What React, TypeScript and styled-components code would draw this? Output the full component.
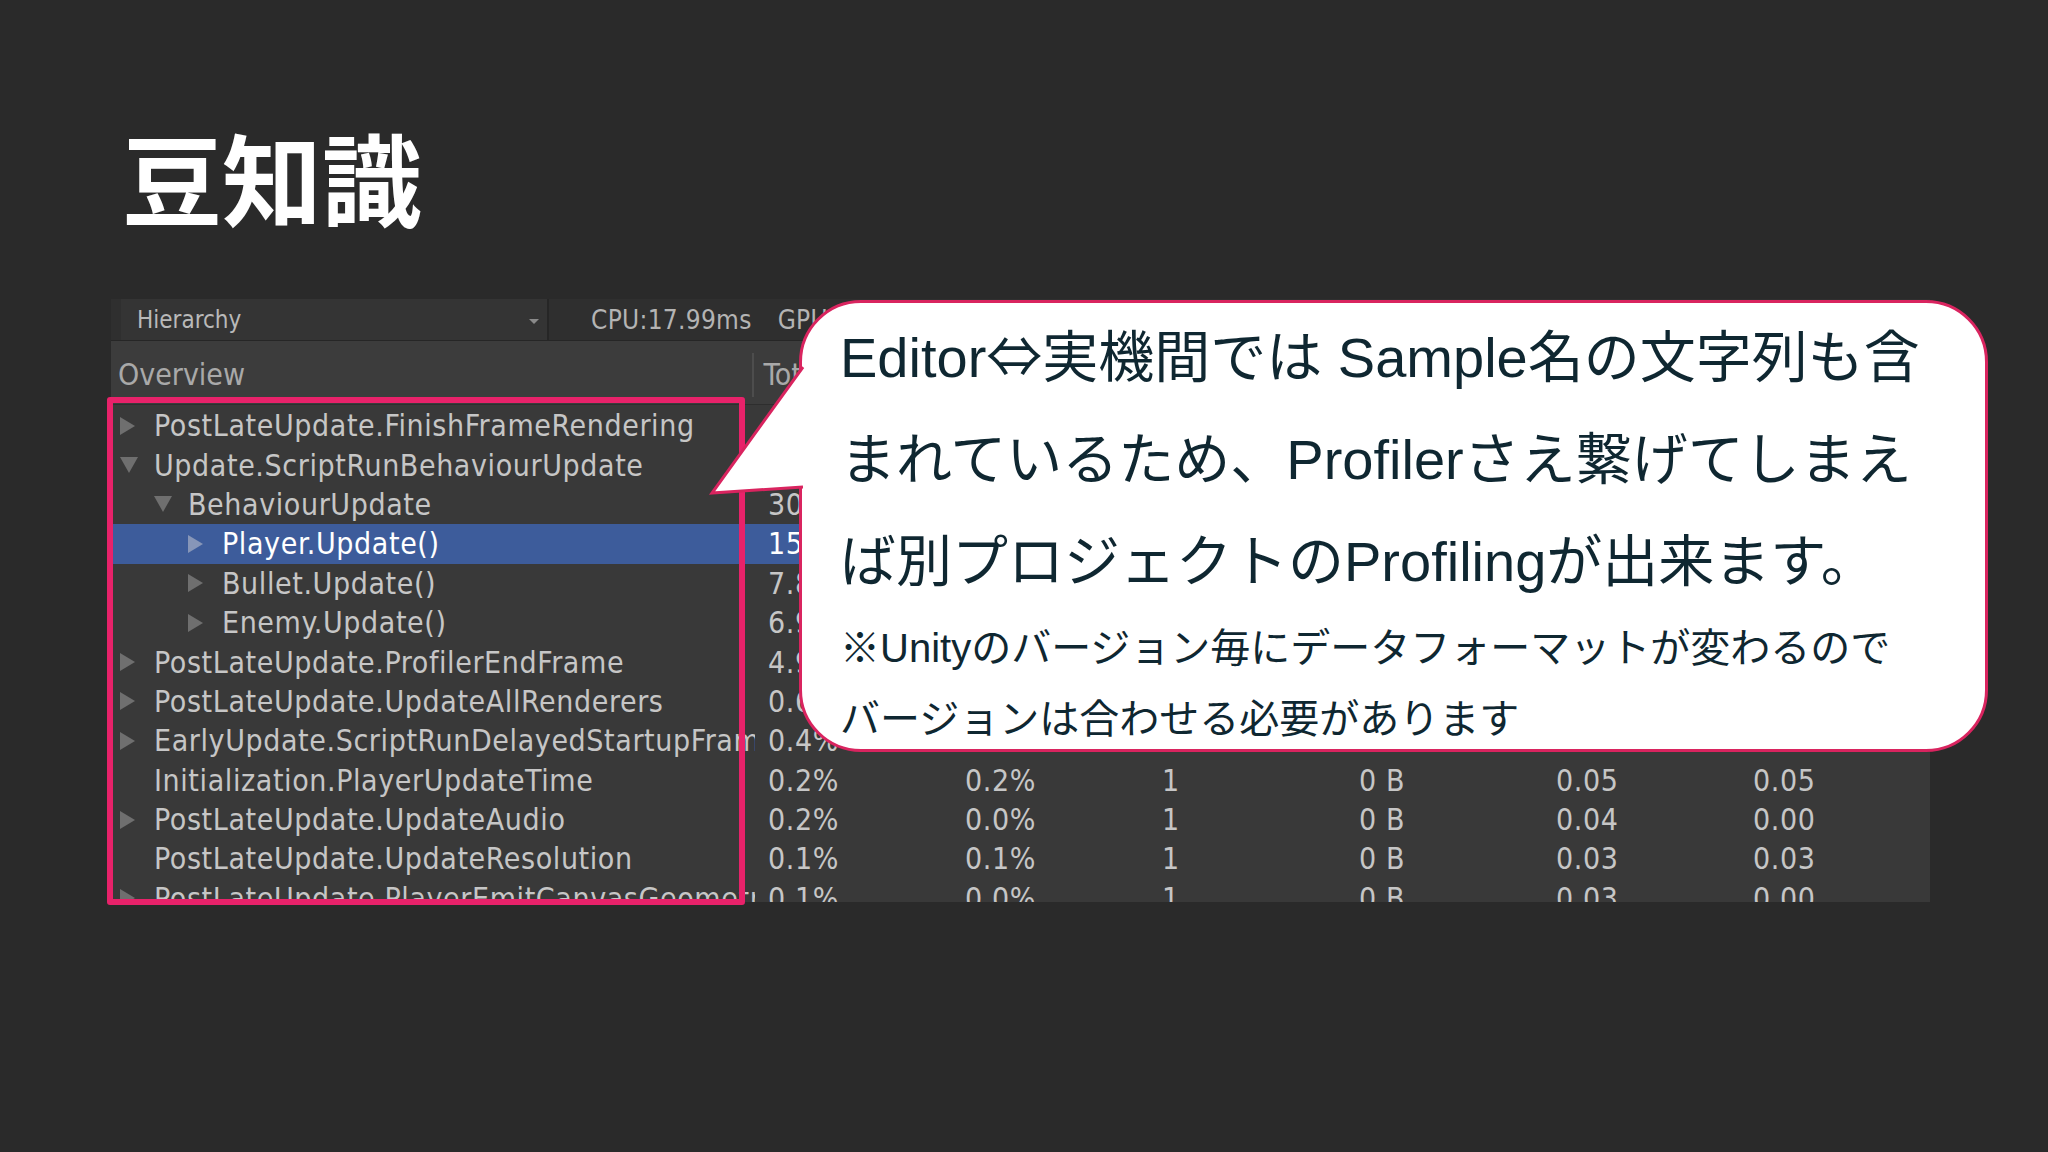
import React from 'react';
import styled, { createGlobalStyle } from 'styled-components';

const GlobalStyle = createGlobalStyle`
  html, body {
    margin: 0;
    padding: 0;
    background: #2a2a2a;
  }
`;

const unityFont = `"DejaVu Sans Condensed", "DejaVu Sans", "Liberation Sans Narrow", sans-serif`;

const Slide = styled.div`
  position: relative;
  width: 2048px;
  height: 1152px;
  overflow: hidden;
  background: #2a2a2a;
  box-sizing: border-box;
  padding-top: 126px;
`;

const Title = styled.h1`
  margin: 0 0 0 122px;
  font-family: "Noto Sans CJK JP", sans-serif;
  font-weight: 700;
  font-size: 100px;
  line-height: 100px;
  color: #ffffff;
`;

const Panel = styled.div`
  margin: 73px 0 0 111px;
  width: 1819px;
  height: 603px;
  background: #393939;
  overflow: hidden;
  font-family: ${unityFont};
  font-stretch: condensed;
`;

const Toolbar = styled.div`
  display: flex;
  align-items: center;
  height: 42px;
  background: #2f2f2f;
  border-bottom: 1px solid #262626;
  box-sizing: border-box;
`;

const Dropdown = styled.div`
  display: flex;
  align-items: center;
  justify-content: space-between;
  margin-left: 10px;
  width: 428px;
  height: 100%;
  box-sizing: border-box;
  padding: 0 8px 0 16px;
  background: #343434;
  border-right: 2px solid #262626;
  font-size: 24px;
  color: #b9b9b9;
`;

const Caret = styled.span`
  width: 0;
  height: 0;
  border-left: 5px solid transparent;
  border-right: 5px solid transparent;
  border-top: 5px solid #8a8a8a;
  margin-top: 4px;
`;

const Stat = styled.span<{ $gap?: number }>`
  margin-left: ${p => p.$gap ?? 0}px;
  font-size: 26px;
  letter-spacing: 0.3px;
  color: #b4b4b4;
  white-space: nowrap;
`;

const Header = styled.div`
  display: flex;
  align-items: center;
  height: 64px;
  padding-top: 4px;
  background: #3c3c3c;
  border-bottom: 1px solid #2e2e2e;
  box-sizing: border-box;
  font-size: 30px;
  color: #a9a9a9;
`;

const HeadName = styled.div`
  width: 644px;
  padding-left: 7px;
  box-sizing: border-box;
`;

const HeadCell = styled.div`
  width: 197px;
  height: 44px;
  display: flex;
  align-items: center;
  padding-left: 9px;
  box-sizing: border-box;
  border-left: 2px solid #4d4d4d;
  white-space: nowrap;
`;

const Rows = styled.div`
  display: flex;
  flex-direction: column;
  padding-top: 1px;
`;

const Row = styled.div<{ $selected?: boolean }>`
  display: flex;
  align-items: center;
  height: 39.4px;
  flex-shrink: 0;
  background: ${p => (p.$selected ? '#3d5c9b' : 'transparent')};
  color: ${p => (p.$selected ? '#ffffff' : '#c6c6c6')};
  font-size: 30px;
  letter-spacing: 0.6px;
`;

const NameCell = styled.div<{ $level: number }>`
  display: flex;
  align-items: center;
  width: 644px;
  flex-shrink: 0;
  padding-left: ${p => 9 + p.$level * 34}px;
  box-sizing: border-box;
  overflow: hidden;
  white-space: nowrap;
`;

const Toggle = styled.span`
  width: 34px;
  flex-shrink: 0;
  display: flex;
  align-items: center;
`;

const Arrow = styled.span<{ $open?: boolean; $selected?: boolean }>`
  width: 0;
  height: 0;
  ${p =>
    p.$open
      ? `border-left: 9px solid transparent;
         border-right: 9px solid transparent;
         border-top: 16px solid #6f6f6f;`
      : `border-top: 9px solid transparent;
         border-bottom: 9px solid transparent;
         border-left: 15px solid ${p.$selected ? '#8796b8' : '#6f6f6f'};`}
`;

const ValueCell = styled.div`
  width: 197px;
  flex-shrink: 0;
  padding-left: 13px;
  box-sizing: border-box;
  white-space: nowrap;
`;

const Highlight = styled.div`
  position: absolute;
  left: 107px;
  top: 397px;
  width: 638px;
  height: 508px;
  border: 6px solid #e8226a;
  border-radius: 3px;
  box-sizing: border-box;
  pointer-events: none;
`;

const Callout = styled.div`
  position: absolute;
  left: 799px;
  top: 300px;
  width: 1189px;
  height: 452px;
  box-sizing: border-box;
  background: #ffffff;
  border: 3px solid #d9245f;
  border-radius: 62px;
  padding: 4px 0 0 38px;
  font-family: "Liberation Sans", "Noto Sans CJK JP", sans-serif;
  color: #0f2731;
`;

const BigLine = styled.div`
  font-size: 56px;
  line-height: 102px;
  white-space: nowrap;
`;

const SmallLine = styled.div`
  font-size: 40px;
  line-height: 71px;
  white-space: nowrap;
`;

const Symbol = styled.span`
  font-family: "Noto Sans CJK JP", sans-serif;
  line-height: 1;
`;

const Tail = styled.svg`
  position: absolute;
  left: 0;
  top: 0;
  overflow: visible;
  pointer-events: none;
`;

type Item = {
  name: string;
  level: number;
  toggle?: 'open' | 'closed';
  values: string[];
  selected?: boolean;
};

const items: Item[] = [
  { name: 'PostLateUpdate.FinishFrameRendering', level: 0, toggle: 'closed', values: ['36.2%', '0.1%', '1', '0 B', '6.52', '0.02'] },
  { name: 'Update.ScriptRunBehaviourUpdate', level: 0, toggle: 'open', values: ['30.9%', '0.0%', '1', '0 B', '5.56', '0.00'] },
  { name: 'BehaviourUpdate', level: 1, toggle: 'open', values: ['30.8%', '0.2%', '1', '0 B', '5.55', '0.04'] },
  { name: 'Player.Update()', level: 2, toggle: 'closed', values: ['15.2%', '15.2%', '1', '0 B', '2.74', '2.74'], selected: true },
  { name: 'Bullet.Update()', level: 2, toggle: 'closed', values: ['7.8%', '7.8%', '1', '0 B', '1.41', '1.41'] },
  { name: 'Enemy.Update()', level: 2, toggle: 'closed', values: ['6.9%', '6.9%', '1', '0 B', '1.24', '1.24'] },
  { name: 'PostLateUpdate.ProfilerEndFrame', level: 0, toggle: 'closed', values: ['4.9%', '0.0%', '1', '0 B', '0.89', '0.00'] },
  { name: 'PostLateUpdate.UpdateAllRenderers', level: 0, toggle: 'closed', values: ['0.6%', '0.1%', '1', '0 B', '0.11', '0.02'] },
  { name: 'EarlyUpdate.ScriptRunDelayedStartupFrame', level: 0, toggle: 'closed', values: ['0.4%', '0.0%', '1', '0 B', '0.08', '0.00'] },
  { name: 'Initialization.PlayerUpdateTime', level: 0, values: ['0.2%', '0.2%', '1', '0 B', '0.05', '0.05'] },
  { name: 'PostLateUpdate.UpdateAudio', level: 0, toggle: 'closed', values: ['0.2%', '0.0%', '1', '0 B', '0.04', '0.00'] },
  { name: 'PostLateUpdate.UpdateResolution', level: 0, values: ['0.1%', '0.1%', '1', '0 B', '0.03', '0.03'] },
  { name: 'PostLateUpdate.PlayerEmitCanvasGeometry', level: 0, toggle: 'closed', values: ['0.1%', '0.0%', '1', '0 B', '0.03', '0.00'] },
];

const columns = ['Total', 'Self', 'Calls', 'GC Alloc', 'Time ms', 'Self ms'];

export default function App() {
  return (
    <>
      <GlobalStyle />
      <Slide>
        <Title>豆知識</Title>

        <Panel>
          <Toolbar>
            <Dropdown>
              <span>Hierarchy</span>
              <Caret />
            </Dropdown>
            <Stat $gap={42}>CPU:17.99ms</Stat>
            <Stat $gap={26}>GPU:0.00ms</Stat>
          </Toolbar>

          <Header>
            <HeadName>Overview</HeadName>
            {columns.map(c => (
              <HeadCell key={c}>{c}</HeadCell>
            ))}
          </Header>

          <Rows>
            {items.map(item => (
              <Row key={item.name} $selected={item.selected}>
                <NameCell $level={item.level}>
                  <Toggle>
                    {item.toggle && (
                      <Arrow $open={item.toggle === 'open'} $selected={item.selected} />
                    )}
                  </Toggle>
                  <span>{item.name}</span>
                </NameCell>
                {item.values.map((v, i) => (
                  <ValueCell key={i}>{v}</ValueCell>
                ))}
              </Row>
            ))}
          </Rows>
        </Panel>

        <Highlight />

        <Callout>
          <BigLine>
            Editor<Symbol>⇔</Symbol>実機間では Sample名の文字列も含
          </BigLine>
          <BigLine>まれているため、Profilerさえ繋げてしまえ</BigLine>
          <BigLine>ば別プロジェクトのProfilingが出来ます。</BigLine>
          <SmallLine>※Unityのバージョン毎にデータフォーマットが変わるので</SmallLine>
          <SmallLine>バージョンは合わせる必要があります</SmallLine>
        </Callout>

        <Tail width="1" height="1">
          <polygon points="814,352 712,493 814,486" fill="#ffffff" />
          <polyline
            points="803,367 712,493 803,487"
            fill="none"
            stroke="#d9245f"
            strokeWidth="3"
            strokeLinejoin="miter"
          />
        </Tail>
      </Slide>
    </>
  );
}
